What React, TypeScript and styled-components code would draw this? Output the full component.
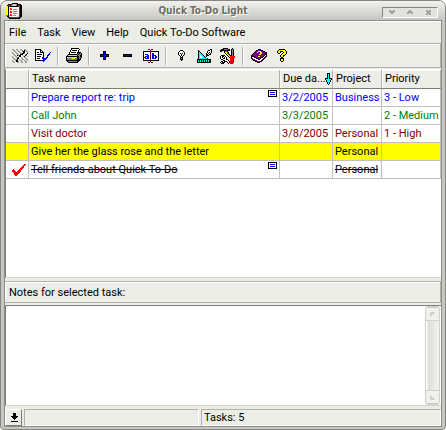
import React from "react";
import styled, { createGlobalStyle, css } from "styled-components";

const face = "#ecede7";
const shade = "#b0b2aa";
const dark = "#7c7d76";
const grid = "#c0c0c0";

const GlobalStyle = createGlobalStyle`
  *, *::before, *::after { box-sizing: border-box; }
  html, body, #root { height: 100%; }
  body { margin: 0; background: #fff; }
  body, button, textarea, table { font: 11px/16px Roboto, "Liberation Sans", sans-serif; color: #000; }
  button { margin: 0; padding: 0; border: 0; background: none; cursor: default; }
`;

const palette: Record<string, string> = {
  k: "#000000", w: "#ffffff", b: "#0000ff", n: "#000080", g: "#808080", s: "#a0a19b",
  r: "#ff0000", m: "#800000", y: "#ffff00", o: "#808000", c: "#00ffff", t: "#008080",
  p: "#800080", l: "#d0d0d0", d: "#554848", e: "#f8f0ec", a: "#c08080",
};

function PixelIcon({ rows }: { rows: string[] }) {
  const width = Math.max(...rows.map((r) => r.length));
  return (
    <svg width={width} height={rows.length} viewBox={`0 0 ${width} ${rows.length}`} shapeRendering="crispEdges" aria-hidden="true">
      {rows.flatMap((row, y) =>
        [...row.matchAll(/([a-z])\1*/g)].map((run) => (
          <path key={`${y}-${run.index}`} fill={palette[run[1]]} d={`M${run.index} ${y}h${run[0].length}v1h-${run[0].length}z`} />
        )),
      )}
    </svg>
  );
}

const icons = {
  clipboard: [
    "      kkkkkk",
    "  kkkkglllgkkkk",
    "ykddkgllllgkddkk",
    "yykdkkkkkkkkddkk",
    "yykeeeeeeeeeedkk",
    "yykeraeeeeeeedkk",
    "yykerreaaaaeedkk",
    "yykeeeeeeeeeedkk",
    "yykeraeaaaaeedkk",
    "yykerreeeeeeedkk",
    "yykeeeeaaaaeedkk",
    "yykeraeeeeeeedkk",
    "ookerreaaaeeldkk",
    " kkeeeeeeeelldkk",
    "  kddddddddddkk",
    "   kkkkkkkkkkk",
  ],
  hatch: [
    "ss  ss  ss  ss  ",
    " ss  ss  ss kss ",
    "  ss  ss  skk ss",
    "s  ss  ss  kk  s",
    "ss  ss  sskks  k",
    " ss  ss kkkw sk ",
    "  ss kskkws  ks ",
    "s  ss  kkw sk  s",
    "ss  sskwws  ss  ",
    " ss  kkw ss  ss ",
    "  ssskws  ss  ss",
    "s  skkw ss  ss s",
    "ss  kks  ss  ss ",
    " ss  ss  ss  ss ",
  ],
  pageTick: [
    "kkkkkk",
    "kwwwwkk",
    "kwwwwkwk",
    "kwkkwkkkk      b",
    "kwwwwwwwk     b ",
    "kwkkkkkwk    bb ",
    "kwwwwwwwk   bb  ",
    "kwkkkkwwk   b   ",
    "kwwwwwwbb  bb   ",
    "kwkkkwwbbbbb    ",
    "kwwwwwwwbbb     ",
    "kkkkkkkkbb      ",
    "        b       ",
  ],
  printer: [
    "     kkkkkkkk",
    "     kwwwwwwwk",
    "    kwkkkkkwk",
    "    kwwwwwwwk",
    "   kwkkkkkwkkkk",
    "   kwwwwwwwkgkgk",
    "  kkkkkkkkkgkggk",
    " klllllllllkggkk",
    "kkkkkkkkkkkkkgkk",
    "kllllllllllkkggk",
    "kgggggyyyggkkgk",
    "kggggggggggkkkk",
    "kkkkkkkkkkkkkk",
    " kgggggggggkk",
    "  kkkkkkkkkk",
  ],
  plus: ["   kkk", "   kbk", "   kbk", "kkkkbkkkk", "kbbbbbbbk", "kkkkbkkkk", "   kbk", "   kbk", "   kkk"],
  minus: ["kkkkkkkkk", "kbbbbbbbk", "kkkkkkkkk"],
  rename: [
    "     mm mm",
    "       m",
    "kkkkkkkmkkkkkkkk",
    "kwwwwwwmwwwwwwwk",
    "kwwwwwwmwbbwwwwk",
    "kwbbbwwmwbbwwwwk",
    "kwwwbbwmwbbbbwwk",
    "kwbbbbwmwbbwbbwk",
    "kbbwbbwmwbbwbbwk",
    "kwbbbbwmwbbbbwwk",
    "kwwwwwwmwwwwwwwk",
    "kkkkkkkmkkkkkkkk",
    "       m",
    "     mm mm",
  ],
  bulb: ["  kkk", " kwwwk", "kwwwwwk", "kwkwkwk", "kwwkwwk", " kwkwk", "  kwk", "  kkk", "  kgk", "  kkk", "   k"],
  setSquare: [
    "             kk",
    " k         kkwk",
    " kk       kwwwk",
    " kck      kwkwk",
    " kcck    kwkwk",
    " kccck   kkwkk",
    " kcwcck  kkk",
    " kcwwcck k",
    " kcwwwcck",
    " kcccccccck",
    "kkkkkkkkkkkkkk",
    "kckckckckckckk",
    "kckckckckckckk",
    "kkkkkkkkkkkkkk",
  ],
  tools: [
    "   kkkkk    k",
    " kkkooookk kgk",
    "kkkkkkkkkk kgk",
    "kk  kook   kgk",
    "    kyyok  kgk",
    "     kyok  kgk",
    "      kyok kgk",
    " kkkk  kyokkgk",
    "kwkkwk  kyorrrr",
    "kwk kwk  krrrrr",
    "kwwkkwk   rrrm",
    " kkwwwkk  rrrm",
    "   kkwwwk rrrm",
    " kk kkkwwkrrrm",
    "kwkkk  kwkrrrm",
    " kkk    k rmm",
  ],
  book: [
    "       kkk",
    "     kkpppkk",
    "    kppyyyppkk",
    "   kppyppyypppkk",
    "  kppppppyyppppk",
    " kppppppyyppppkk",
    "kppppppppppppkwk",
    "kkkppppyypppkwpk",
    "kwwkkpppppkkwpk",
    "kpwwwkkppkwwpk",
    " kppwwwkkwwpk",
    "  kkppwwwwpk",
    "    kkpppkk",
    "      kkk",
  ],
  help: [
    "  kkkkkk",
    " kyyyyyyk",
    "kyykkkyyyk",
    "kyyk  kyyk",
    " kk  kyyyk",
    "    kyyyk",
    "   kyykk",
    "   kyyk",
    "    kk",
    "   kkkk",
    "   kyyk",
    "   kyyk",
    "    kk",
  ],
  note: ["kkkkkkkkk", "kwwwwwwwk", "kwbbbbbwk", "kwwwwwwwk", "kwbbbbbwk", "kwwwwwwwk", "kkkkkkkkk"],
  done: [
    "            rr",
    "           rr",
    "          rr",
    "         rrr",
    "        rrr",
    " r     rrr",
    "rrr   rrr",
    "rrrr rrrr",
    " rrrrrrr",
    "  rrrrr",
    "  rrrr",
    "   rr",
  ],
  sort: ["  kkk", "  kck", "  kck", "  kck", "  kck", "kkkckkk", "kccccck", " kccck", " kccck", "  kck", "  kck", "   k"],
  download: ["   kkk", "   kkk", "   kkk", " kkkkkkk", "  kkkkk", "   kkk", "    k", "", " kkkkkkk"],
  shadeWin: ["ss  ss", "ssssss", " ssss", "  ss"],
  maxWin: ["  ss", " ssss", "ssssss", "ss  ss"],
  closeWin: ["ss ss", "sssss", " sss", "sssss", "ss ss"],
  arrowUp: ["lllll", "llll", "lll", "ll", "l"],
  arrowDown: ["l", "ll", "lll", "llll", "lllll"],
};

const Window = styled.div`
  display: flex;
  flex-direction: column;
  height: 100vh;
  border: 1px solid #858680;
  border-radius: 7px 7px 4px 4px;
  background: #c5c7c0;
  overflow: hidden;
`;

const TitleBar = styled.header`
  display: flex;
  align-items: center;
  flex: none;
  height: 19px;
  padding: 1px 7px 0 5px;
  background: linear-gradient(#f4f2f0, #dddeda 45%, #c4c7c0);
`;

const Title = styled.h1`
  flex: 1;
  margin: 0;
  padding-left: 2px;
  font: bold 10px/16px "DejaVu Sans Condensed", "DejaVu Sans", sans-serif;
  text-align: center;
  color: #6e6e64;
  text-shadow: 1px 1px #fff;
`;

const Caption = styled.div`
  display: flex;
  width: 56px;
  height: 11px;
  margin-top: 2px;
  border: 1px solid #85867f;
  border-right-color: #fff;
  border-bottom-color: #fff;
  background: #e2e3de;
`;

const CaptionButton = styled.button`
  display: flex;
  flex: 1;
  align-items: center;
  justify-content: center;
`;

const Body = styled.main`
  display: flex;
  flex: 1;
  flex-direction: column;
  min-height: 0;
  margin: 0 3px 2px;
  border: 1px solid #8c8d86;
  background: ${face};
`;

const MenuBar = styled.nav`
  display: flex;
  flex: none;
  height: 22px;
  padding-left: 4px;
  gap: 11px;
  border-top: 1px solid #fff;
`;

const MenuItem = styled.button`
  white-space: nowrap;
`;

const ToolBar = styled.div`
  display: flex;
  align-items: center;
  flex: none;
  height: 25px;
  padding-left: 3px;
  border: 1px solid ${shade};
  border-left: 0;
  box-shadow: inset 1px 1px #fff;
`;

const ToolButton = styled.button`
  display: flex;
  align-items: center;
  justify-content: center;
  flex: none;
  width: 23px;
  height: 22px;
`;

const Divider = styled.span`
  flex: none;
  width: 2px;
  height: 18px;
  margin: 0 3px;
  border-left: 1px solid ${shade};
  border-right: 1px solid #fff;
`;

const TaskPane = styled.section`
  flex: 1;
  min-height: 0;
  margin-top: 1px;
  background: #fff;
  border-top: 1px solid #fff;
  border-left: 1px solid ${dark};
  border-bottom: 1px solid #d4d5d0;
`;

const TaskTable = styled.table`
  width: 100%;
  table-layout: fixed;
  border-collapse: separate;
  border-spacing: 0;
`;

const Col = styled.col<{ $w?: number }>`
  ${(p) => p.$w && css`width: ${p.$w}px;`}
`;

const Th = styled.th`
  height: 19px;
  padding: 0 0 0 3px;
  border-right: 1px solid ${shade};
  border-bottom: 1px solid ${dark};
  background: ${face};
  box-shadow: inset 1px 1px #fff;
  font-weight: normal;
  text-align: left;
  white-space: nowrap;
`;

const HeaderLine = styled.div`
  display: flex;
  align-items: center;
  svg { flex: none; }
`;

const HeaderText = styled.span`
  flex: 1;
  min-width: 0;
`;

const Row = styled.tr<{ $color: string; $selected?: boolean; $done?: boolean }>`
  background: ${(p) => (p.$selected ? "#ffff00" : "#fff")};
  color: ${(p) => p.$color};
  text-decoration: ${(p) => (p.$done ? "line-through" : "none")};
`;

const Td = styled.td`
  height: 18px;
  padding: 0 0 0 2px;
  border-right: 1px solid ${grid};
  border-bottom: 1px solid ${grid};
  white-space: nowrap;
  overflow: hidden;
`;

const DoneMark = styled.div`
  display: flex;
  justify-content: center;
  padding-left: 2px;
`;

const NameLine = styled.div`
  display: flex;
  justify-content: space-between;
  padding-right: 2px;
`;

const NotesLabel = styled.label`
  display: block;
  flex: none;
  height: 22px;
  margin: 3px 0 2px;
  padding: 3px 4px 0;
  border: 1px solid ${shade};
  border-left: 0;
  box-shadow: inset 1px 1px #fff;
`;

const NotesPane = styled.div`
  display: flex;
  flex: none;
  height: 101px;
  border-top: 1px solid ${dark};
  border-bottom: 1px solid #d4d5d0;
  border-left: 1px solid ${dark};
  background: #fff;
`;

const Notes = styled.textarea`
  flex: 1;
  min-width: 0;
  padding: 2px;
  border: 0;
  outline: 0;
  resize: none;
  background: #fff;
`;

const ScrollBar = styled.div`
  display: flex;
  flex-direction: column;
  justify-content: space-between;
  width: 15px;
  margin-right: 1px;
  border: 1px solid #d0d0ca;
  border-radius: 3px;
  background: linear-gradient(90deg, #fff 1px, #deded8 2px, #f3f2ee);
`;

const ScrollButton = styled.button`
  display: flex;
  align-items: center;
  justify-content: center;
  height: 14px;
  border: 1px solid #d0d0ca;
  border-width: 1px 0;
  background: #f2f1ed;
`;

const StatusBar = styled.footer`
  display: flex;
  flex: none;
  height: 20px;
  padding-top: 3px;
  gap: 2px;
`;

const StatusButton = styled.button`
  display: flex;
  align-items: center;
  justify-content: center;
  width: 17px;
  border: 1px solid #fff;
  border-right-color: ${dark};
  border-bottom-color: ${dark};
`;

const StatusCell = styled.div<{ $w?: number }>`
  ${(p) => (p.$w ? css`width: ${p.$w}px;` : css`flex: 1;`)}
  padding: 0 2px;
  border: 1px solid ${shade};
  border-right-color: #fff;
  border-bottom-color: #fff;
`;

type Tool = { label: string; icon: keyof typeof icons } | null;

const tools: Tool[] = [
  { label: "Clear completed", icon: "hatch" },
  { label: "Mark as done", icon: "pageTick" },
  null,
  { label: "Print", icon: "printer" },
  null,
  { label: "Add task", icon: "plus" },
  { label: "Delete task", icon: "minus" },
  { label: "Rename task", icon: "rename" },
  null,
  { label: "Tip", icon: "bulb" },
  { label: "Customize", icon: "setSquare" },
  { label: "Options", icon: "tools" },
  null,
  { label: "Manual", icon: "book" },
  { label: "About", icon: "help" },
];

const tasks = [
  { name: "Prepare report re: trip", due: "3/2/2005", project: "Business", priority: "3 - Low", color: "#0000ff", note: true },
  { name: "Call John", due: "3/3/2005", project: "", priority: "2 - Medium", color: "#008000" },
  { name: "Visit doctor", due: "3/8/2005", project: "Personal", priority: "1 - High", color: "#800000" },
  { name: "Give her the glass rose and the letter", due: "", project: "Personal", priority: "", color: "#000000", selected: true },
  { name: "Tell friends about Quick To-Do", due: "", project: "Personal", priority: "", color: "#000000", note: true, done: true },
];

export default function App() {
  return (
    <>
      <GlobalStyle />
      <Window>
        <TitleBar>
          <PixelIcon rows={icons.clipboard} />
          <Title>Quick To-Do Light</Title>
          <Caption>
            <CaptionButton aria-label="Minimize"><PixelIcon rows={icons.shadeWin} /></CaptionButton>
            <CaptionButton aria-label="Maximize"><PixelIcon rows={icons.maxWin} /></CaptionButton>
            <CaptionButton aria-label="Close"><PixelIcon rows={icons.closeWin} /></CaptionButton>
          </Caption>
        </TitleBar>
        <Body>
          <MenuBar>
            {["File", "Task", "View", "Help", "Quick To-Do Software"].map((item) => (
              <MenuItem key={item}>{item}</MenuItem>
            ))}
          </MenuBar>
          <ToolBar>
            {tools.map((tool, i) =>
              tool ? (
                <ToolButton key={tool.label} aria-label={tool.label}>
                  <PixelIcon rows={icons[tool.icon]} />
                </ToolButton>
              ) : (
                <Divider key={i} />
              ),
            )}
          </ToolBar>
          <TaskPane>
            <TaskTable>
              <colgroup>
                <Col $w={23} />
                <Col />
                <Col $w={53} />
                <Col $w={49} />
                <Col $w={59} />
              </colgroup>
              <thead>
                <tr>
                  <Th aria-label="Done" />
                  <Th>Task name</Th>
                  <Th aria-sort="ascending">
                    <HeaderLine>
                      <HeaderText>Due da...</HeaderText>
                      <PixelIcon rows={icons.sort} />
                    </HeaderLine>
                  </Th>
                  <Th>Project</Th>
                  <Th>Priority</Th>
                </tr>
              </thead>
              <tbody>
                {tasks.map((task) => (
                  <Row key={task.name} $color={task.color} $selected={task.selected} $done={task.done}>
                    <Td>{task.done && <DoneMark><PixelIcon rows={icons.done} /></DoneMark>}</Td>
                    <Td>
                      <NameLine>
                        {task.name}
                        {task.note && <PixelIcon rows={icons.note} />}
                      </NameLine>
                    </Td>
                    <Td>{task.due}</Td>
                    <Td>{task.project}</Td>
                    <Td>{task.priority}</Td>
                  </Row>
                ))}
              </tbody>
            </TaskTable>
          </TaskPane>
          <NotesLabel htmlFor="notes">Notes for selected task:</NotesLabel>
          <NotesPane>
            <Notes id="notes" />
            <ScrollBar>
              <ScrollButton aria-label="Scroll up"><PixelIcon rows={icons.arrowUp} /></ScrollButton>
              <ScrollButton aria-label="Scroll down"><PixelIcon rows={icons.arrowDown} /></ScrollButton>
            </ScrollBar>
          </NotesPane>
          <StatusBar>
            <StatusButton aria-label="Collapse"><PixelIcon rows={icons.download} /></StatusButton>
            <StatusCell $w={175} />
            <StatusCell>Tasks: 5</StatusCell>
          </StatusBar>
        </Body>
      </Window>
    </>
  );
}
